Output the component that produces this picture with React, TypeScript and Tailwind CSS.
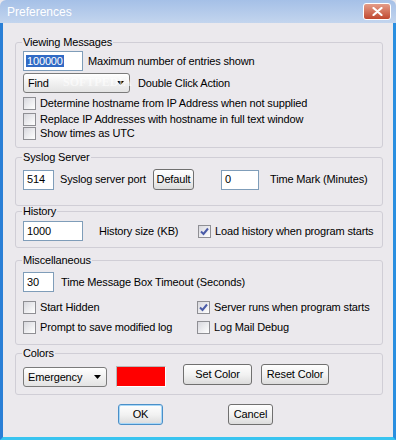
import React from 'react';

interface TextBoxProps {
  value: string;
  className?: string;
  selected?: boolean;
}

const TextBox: React.FC<TextBoxProps> = ({ value, className = '', selected = false }) => (
  <div className={`h-[20px] shrink-0 border border-[#7f9db9] bg-white flex items-center pl-[2px] ${className}`}>
    {selected ? (
      <span className="bg-[#316ac5] text-white leading-[12px] px-[1px]">{value}</span>
    ) : (
      <span className="pl-[1px]">{value}</span>
    )}
  </div>
);

const CheckBox: React.FC<{ label: string; checked?: boolean }> = ({ label, checked = false }) => (
  <div className="flex items-center gap-[4px] h-[13px]">
    <div className="w-[13px] h-[13px] shrink-0 border border-[#8f8f94] bg-gradient-to-br from-[#d8d8de] to-white flex items-center justify-center">
      {checked && (
        <svg width="9" height="9" viewBox="0 0 9 9">
          <path d="M1 4.5 L3.5 7 L8 1.5" fill="none" stroke="#4b5ca8" strokeWidth="2" />
        </svg>
      )}
    </div>
    <span className="whitespace-nowrap">{label}</span>
  </div>
);

const Btn: React.FC<{ label: string; className?: string; focused?: boolean }> = ({ label, className = '', focused = false }) => (
  <button
    className={`shrink-0 rounded-[3px] border flex items-center justify-center bg-gradient-to-b from-[#fefefe] via-[#f2f2f2] to-[#dcdcdc] ${
      focused ? 'border-[#4a8fc8] shadow-[inset_0_0_0_1px_#a8d8f8]' : 'border-[#707070]'
    } ${className}`}
  >
    {label}
  </button>
);

const Combo: React.FC<{ value: string; className?: string }> = ({ value, className = '' }) => (
  <div className={`shrink-0 rounded-[3px] border border-[#7b7b7b] bg-gradient-to-b from-white to-[#e3e3e3] flex items-center justify-between pl-[4px] pr-[5px] ${className}`}>
    <span>{value}</span>
    <svg width="7" height="4" viewBox="0 0 7 4">
      <path d="M0 0h7L3.5 4z" fill="#000" />
    </svg>
  </div>
);

const Group: React.FC<{ title: string; className?: string; children: React.ReactNode }> = ({ title, className = '', children }) => (
  <fieldset className={`ml-[12px] mr-[10px] border border-[#d0ced6] rounded-[3px] min-w-0 ${className}`}>
    <legend className="ml-[6px] px-[1px] leading-[12px]">{title}</legend>
    {children}
  </fieldset>
);

export default function App() {
  return (
    <div className="w-[396px] h-[440px] flex flex-col font-['Liberation_Sans',Arial,sans-serif] text-[11px] tracking-[-0.15px] text-black bg-[#ebe9ed]">
      {/* Title bar */}
      <div className="h-[23px] shrink-0 rounded-t-[6px] bg-gradient-to-b from-[#a5c0e7] to-[#c3d5ee] flex items-center justify-between pl-[7px] pr-[5px]">
        <span className="text-white text-[12px] tracking-normal">Preferences</span>
        <div className="w-[28px] h-[17px] rounded-[3px] border border-white bg-gradient-to-b from-[#e49c88] to-[#c0472f] flex items-center justify-center">
          <svg width="11" height="9" viewBox="0 0 11 9">
            <path d="M1.5 1 L9.5 8 M9.5 1 L1.5 8" stroke="#fff" strokeWidth="2.2" strokeLinecap="round" />
          </svg>
        </div>
      </div>

      {/* Body */}
      <div className="flex-1 flex flex-col border-l-[3px] border-r-[3px] border-b-[3px] border-l-[#2a7fd6] border-r-[#2a8fe0] border-b-[#38c4f0]">
        <Group title="Viewing Messages" className="mt-[13px]">
          <div className="relative pl-[7px] pt-[3px] pb-[7px]">
            <div className="flex items-center">
              <TextBox value="100000" selected className="w-[60px]" />
              <span className="ml-[5px]">Maximum number of entries shown</span>
            </div>
            <div className="flex items-center mt-[2px]">
              <Combo value="Find" className="w-[107px] h-[20px]" />
              <span className="ml-[8px]">Double Click Action</span>
            </div>
            <div className="mt-[4px]">
              <CheckBox label="Determine hostname from IP Address when not supplied" />
            </div>
            <div className="mt-[3px]">
              <CheckBox label="Replace IP Addresses with hostname in full text window" />
            </div>
            <div className="mt-[1px]">
              <CheckBox label="Show times as UTC" />
            </div>
            {/* faint watermark over the combo */}
            <span className="absolute left-[47px] top-[27px] font-['Liberation_Serif',serif] font-bold text-[12px] leading-[14px] tracking-normal text-white/60 pointer-events-none">
              SOFTPEDIA
            </span>
          </div>
        </Group>

        <Group title="Syslog Server" className="mt-[3px]">
          <div className="pl-[7px] pt-[6px] pb-[15px] flex items-center">
            <TextBox value="514" className="w-[31px]" />
            <span className="ml-[6px] w-[93px]">Syslog server port</span>
            <Btn label="Default" className="w-[41px] h-[21px]" />
            <TextBox value="0" className="ml-[27px] w-[38px]" />
            <span className="ml-[11px]">Time Mark (Minutes)</span>
          </div>
        </Group>

        <Group title="History" className="-mt-[1px]">
          <div className="pl-[7px] pt-[4px] pb-[6px] flex items-center">
            <TextBox value="1000" className="w-[60px]" />
            <span className="ml-[16px] w-[99px]">History size (KB)</span>
            <CheckBox label="Load history when program starts" checked />
          </div>
        </Group>

        <Group title="Miscellaneous" className="mt-[6px]">
          <div className="pl-[7px] pt-[6px] pb-[10px]">
            <div className="flex items-center">
              <TextBox value="30" className="w-[31px]" />
              <span className="ml-[7px]">Time Message Box Timeout (Seconds)</span>
            </div>
            <div className="grid grid-cols-[174px_1fr] gap-y-[7px] mt-[9px]">
              <CheckBox label="Start Hidden" />
              <CheckBox label="Server runs when program starts" checked />
              <CheckBox label="Prompt to save modified log" />
              <CheckBox label="Log Mail Debug" />
            </div>
          </div>
        </Group>

        <Group title="Colors" className="mt-[2px]">
          <div className="pl-[7px] pt-[5px] pb-[7px] flex items-start">
            <Combo value="Emergency" className="w-[84px] h-[20px] mt-[3px]" />
            <div className="ml-[9px] mt-[2px] w-[50px] h-[21px] bg-[#ff0000] border border-t-[#b8b8b8] border-l-[#b8b8b8] border-r-white border-b-white" />
            <Btn label="Set Color" className="ml-[17px] w-[69px] h-[21px]" />
            <Btn label="Reset Color" className="ml-[9px] w-[68px] h-[21px]" />
          </div>
        </Group>

        <div className="flex mt-[9px] pl-[115px]">
          <Btn label="OK" focused className="w-[45px] h-[21px]" />
          <Btn label="Cancel" className="ml-[65px] w-[45px] h-[21px]" />
        </div>
      </div>
    </div>
  );
}
